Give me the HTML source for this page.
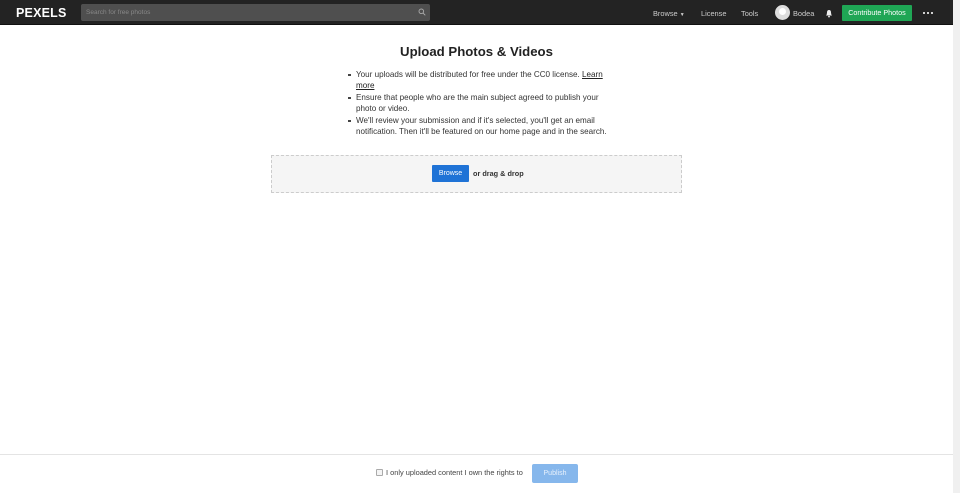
<!DOCTYPE html>
<html><head><meta charset="utf-8"><style>
*{margin:0;padding:0;box-sizing:border-box}
body{width:960px;height:493px;overflow:hidden;background:#fff;font-family:"Liberation Sans",sans-serif;position:relative}
.hdr{position:absolute;left:0;top:0;width:953px;height:25px;background:#232323;border-bottom:1px solid #111}
.logo{position:absolute;left:16px;top:6px;line-height:14px;color:#fff;font-weight:bold;font-size:12.5px;letter-spacing:0.2px}
.search{position:absolute;left:81px;top:4px;width:349px;height:17px;background:#4f4f4f;border-radius:2px}
.search span{position:absolute;left:5px;top:5px;line-height:8px;font-size:6.5px;color:#888}
.nav{position:absolute;top:9px;line-height:9px;font-size:7.4px;color:#ccc}
.av{position:absolute;left:775px;top:5px;width:15px;height:15px;border-radius:50%;background:#ddd;overflow:hidden}
.av:after{content:"";position:absolute;left:4px;top:3px;width:7px;height:7px;border-radius:50%;background:#fff}
.cbtn{position:absolute;left:842px;top:5px;width:70px;height:16px;background:#1fa655;color:#fff;font-size:7.2px;text-align:center;line-height:16px;border-radius:1px}
.scroll{position:absolute;left:953px;top:0;width:7px;height:493px;background:#f0f0f0}
h1{position:absolute;left:0;width:953px;top:44px;line-height:16px;text-align:center;font-size:13.2px;color:#222;font-weight:bold}
ul{position:absolute;left:348px;top:69px;width:264px;list-style:none;font-size:8.1px;color:#333;line-height:11px}
ul li{position:relative;padding-left:8px;margin-bottom:1px}
ul li:before{content:"";position:absolute;left:0;top:4.5px;width:2.5px;height:2.5px;background:#444}
ul a{color:#222;text-decoration:underline}
.drop{position:absolute;left:271px;top:155px;width:411px;height:38px;background:#f5f5f5;border:1px dashed #ccc}
.bb{position:absolute;left:432px;top:165px;width:37px;height:17px;background:#1f73d6;color:#fff;font-size:7px;text-align:center;line-height:17px;border-radius:1px}
.dd{position:absolute;left:473px;top:169px;line-height:9px;font-size:7.3px;font-weight:bold;color:#333}
.foot{position:absolute;left:0;top:454px;width:953px;height:1px;background:#e4e4e4}
.cb{position:absolute;left:376px;top:469px;width:7px;height:7px;border:1px solid #aaa;background:#f4f4f4;border-radius:1px}
.ct{position:absolute;left:386px;top:468px;line-height:9px;font-size:7.4px;color:#444}
.pub{position:absolute;left:532px;top:464px;width:46px;height:19px;background:#86b7ec;color:#e8f1fc;font-size:7px;text-align:center;line-height:19px;border-radius:2px}
</style></head><body>
<div class="hdr">
<div class="logo">PEXELS</div>
<div class="search"><span>Search for free photos</span>
<svg style="position:absolute;left:337px;top:4px" width="8" height="8" viewBox="0 0 8 8"><circle cx="3.3" cy="3.3" r="2.3" fill="none" stroke="#aaa" stroke-width="0.9"/><path d="M5 5L7.3 7.3" stroke="#aaa" stroke-width="0.9"/></svg></div>
<div class="nav" style="left:653px">Browse <span style="font-size:5px">▼</span></div>
<div class="nav" style="left:701px">License</div>
<div class="nav" style="left:741px">Tools</div>
<div class="av"></div>
<div class="nav" style="left:793px">Bodea</div>
<svg style="position:absolute;left:825px;top:9px" width="8" height="9" viewBox="0 0 8 9"><path d="M1 6.5Q2 5.5 2 3.5Q2 1 4 1Q6 1 6 3.5Q6 5.5 7 6.5Z" fill="#eee"/><circle cx="4" cy="7.6" r="0.9" fill="#eee"/></svg>
<div class="cbtn">Contribute Photos</div>
<div style="position:absolute;left:922px;top:12px;width:12px;height:2px;background:radial-gradient(circle,#ddd 1px,transparent 1.2px) 0 0/4px 2px"></div>
</div>
<div class="scroll"></div>
<h1>Upload Photos &amp; Videos</h1>
<ul>
<li>Your uploads will be distributed for free under the CC0 license. <a>Learn more</a></li>
<li>Ensure that people who are the main subject agreed to publish your photo or video.</li>
<li>We'll review your submission and if it's selected, you'll get an email notification. Then it'll be featured on our home page and in the search.</li>
</ul>
<div class="drop"></div>
<div class="bb">Browse</div>
<div class="dd">or drag &amp; drop</div>
<div class="foot"></div>
<div class="cb"></div>
<div class="ct">I only uploaded content I own the rights to</div>
<div class="pub">Publish</div>
</body></html>
